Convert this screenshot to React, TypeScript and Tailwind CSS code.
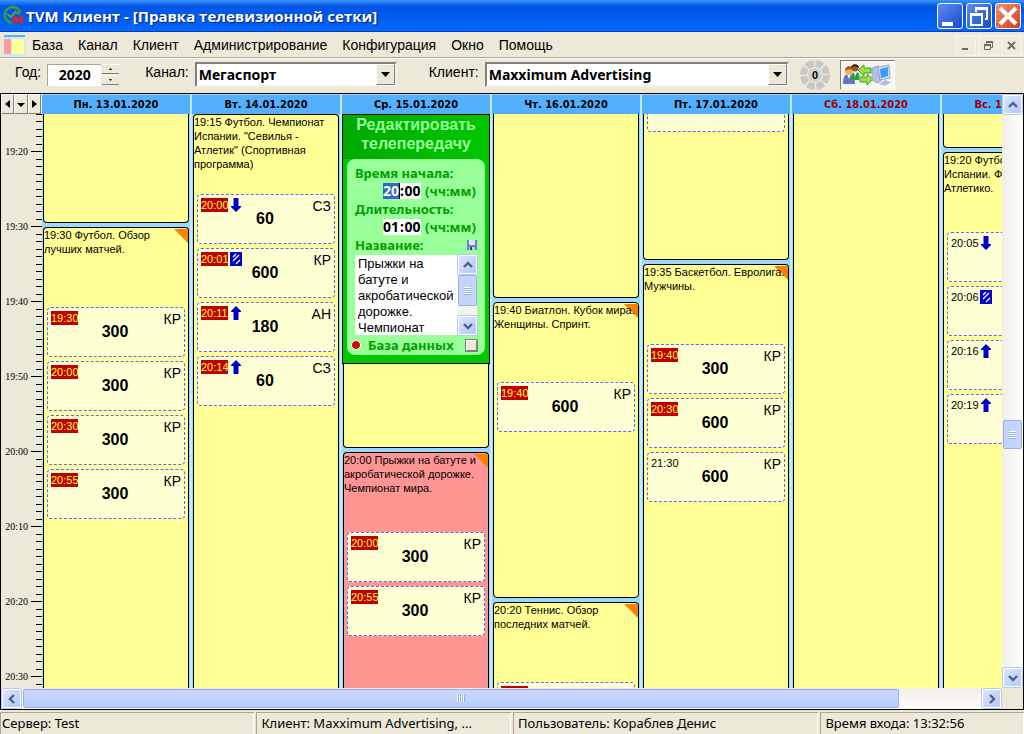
import React from "react";
import clsx from "clsx";

type Mark = "up" | "down" | "both";

interface Spot {
  time: string;
  amount: string;
  code: string;
  hot?: boolean;
  mark?: Mark;
}

interface Program {
  title?: string;
  // static heights of the blocks that end inside the visible area
  size: string;
  open?: boolean;
  corner?: boolean;
  pink?: boolean;
  tail?: boolean;
  spots?: Spot[];
}

interface Day {
  name: string;
  weekend?: boolean;
  editor?: boolean;
  programs: Program[];
}

const DAYS: Day[] = [
  {
    name: "Пн. 13.01.2020",
    programs: [
      { size: "h-[109px]", open: true },
      {
        title: "19:30 Футбол. Обзор лучших матчей.",
        size: "flex-1",
        corner: true,
        spots: [
          { time: "19:30", amount: "300", code: "КР", hot: true },
          { time: "20:00", amount: "300", code: "КР", hot: true },
          { time: "20:30", amount: "300", code: "КР", hot: true },
          { time: "20:55", amount: "300", code: "КР", hot: true },
        ],
      },
    ],
  },
  {
    name: "Вт. 14.01.2020",
    programs: [
      {
        title: '19:15 Футбол. Чемпионат Испании. "Севилья - Атлетик" (Спортивная программа)',
        size: "flex-1",
        spots: [
          { time: "20:00", amount: "60", code: "СЗ", hot: true, mark: "down" },
          { time: "20:01", amount: "600", code: "КР", hot: true, mark: "both" },
          { time: "20:11", amount: "180", code: "АН", hot: true, mark: "up" },
          { time: "20:14", amount: "60", code: "СЗ", hot: true, mark: "up" },
        ],
      },
    ],
  },
  {
    name: "Ср. 15.01.2020",
    editor: true,
    programs: [
      { size: "h-[84px]", open: true },
      {
        title: "20:00 Прыжки на батуте и акробатической дорожке. Чемпионат мира.",
        size: "flex-1",
        corner: true,
        pink: true,
        spots: [
          { time: "20:00", amount: "300", code: "КР", hot: true },
          { time: "20:55", amount: "300", code: "КР", hot: true },
        ],
      },
    ],
  },
  {
    name: "Чт. 16.01.2020",
    programs: [
      { size: "h-[184px]", open: true },
      {
        title: "19:40 Биатлон. Кубок мира. Женщины. Спринт.",
        size: "h-[296px]",
        corner: true,
        spots: [{ time: "19:40", amount: "600", code: "КР", hot: true }],
      },
      {
        title: "20:20 Теннис. Обзор последних матчей.",
        size: "flex-1",
        corner: true,
        spots: [{ time: "20:20", amount: "300", code: "КР", hot: true }],
      },
    ],
  },
  {
    name: "Пт. 17.01.2020",
    programs: [
      { size: "h-[146px]", open: true, tail: true },
      {
        title: "19:35 Баскетбол. Евролига. Мужчины.",
        size: "flex-1",
        corner: true,
        spots: [
          { time: "19:40", amount: "300", code: "КР", hot: true },
          { time: "20:30", amount: "600", code: "КР", hot: true },
          { time: "21:30", amount: "600", code: "КР" },
        ],
      },
    ],
  },
  {
    name: "Сб. 18.01.2020",
    weekend: true,
    programs: [{ size: "flex-1", open: true }],
  },
  {
    name: "Вс. 19.01.2020",
    weekend: true,
    programs: [
      { size: "h-[34px]", open: true },
      {
        title: "19:20 Футбол.\nИспании. Ф\nАтлетико.",
        size: "flex-1",
        spots: [
          { time: "20:05", amount: "60", code: "СЗ", mark: "down" },
          { time: "20:06", amount: "60", code: "КР", mark: "both" },
          { time: "20:16", amount: "60", code: "АН", mark: "up" },
          { time: "20:19", amount: "60", code: "СЗ", mark: "up" },
        ],
      },
    ],
  },
];

// the first segment starts above the visible area, so it has no label
const HOURS = ["", "19:20", "19:30", "19:40", "19:50", "20:00", "20:10", "20:20", "20:30"];
const MENU = ["База", "Канал", "Клиент", "Администрирование", "Конфигурация", "Окно", "Помощь"];

const LogoIcon = () => (
  <svg width="22" height="22" viewBox="0 0 22 22" fill="none" className="shrink-0">
    <path d="M17 5A8 8 0 1 0 11 18" stroke="#3f9a3a" strokeWidth="2.4" />
    <path d="M5 9l4 3 5-6" stroke="#5aa04a" strokeWidth="2" />
    <path d="M19 4l-1 6-5-2z" fill="#3f9a3a" />
    <path d="M11 19l2-7 3 4 4-4-1 7" stroke="#e02020" strokeWidth="2.6" />
  </svg>
);

const GridIcon = () => (
  <svg width="21" height="21" viewBox="0 0 21 21" className="shrink-0">
    <rect width="21" height="21" fill="#c8ecff" />
    <rect width="21" height="2" fill="#52b0ff" />
    <rect y="4" width="7" height="15" fill="#ff9a98" />
    <rect x="8" y="4" width="12" height="15" fill="#ffff96" />
  </svg>
);

const MarkIcon: React.FC<{ mark: Mark }> = ({ mark }) => {
  if (mark === "both") {
    return (
      <svg width="12" height="14" viewBox="0 0 12 14" className="ml-[2px]">
        <rect width="12" height="14" fill="#0000c8" />
        <path d="M3 5l3-3M3 9l6-6M6 12l4-4" stroke="#fff" strokeWidth="1.3" />
      </svg>
    );
  }
  return (
    <svg
      width="10"
      height="14"
      viewBox="0 0 10 14"
      className={clsx("ml-[3px]", mark === "down" && "rotate-180")}
    >
      <path d="M5 0l5 5v1H7.500v8h-5V6H0V5z" fill="#0000c8" />
    </svg>
  );
};

const Chevron: React.FC<{ className?: string }> = ({ className }) => (
  <svg width="10" height="8" viewBox="0 0 10 8" className={className}>
    <path d="M1 6l4-4 4 4" stroke="#4d6185" strokeWidth="2.4" fill="none" />
  </svg>
);

const ScrollButton: React.FC<{ label: string; turn?: string }> = ({ label, turn }) => (
  <button
    type="button"
    aria-label={label}
    className="flex size-[19px] shrink-0 items-center justify-center rounded-[2px] border border-white bg-linear-to-br from-[#dbe5ff] to-[#b4c8f8] shadow-[0_0_0_1px_#b8c8f0]"
  >
    <Chevron className={turn} />
  </button>
);

const Grip: React.FC<{ vertical?: boolean }> = ({ vertical }) => (
  <span className={clsx("flex", vertical && "flex-col")}>
    {[0, 1, 2, 3].map((i) => (
      <span
        key={i}
        className={clsx(
          "border-[#8cb0f8] bg-white",
          vertical ? "h-[2px] w-[7px] border-b" : "h-[7px] w-[2px] border-r"
        )}
      />
    ))}
  </span>
);

const SpotCard: React.FC<{ spot: Spot }> = ({ spot }) => (
  <div className="relative flex h-[50px] shrink-0 justify-between rounded-[4px] border border-dashed border-[#6464f0] bg-[#ffffd4] px-[3px] pt-[3px]">
    <div className="flex h-[14px]">
      <span
        className={clsx(
          "w-[27px] text-[11px] leading-[14px] whitespace-nowrap",
          spot.hot ? "bg-[#c00000] text-[#ffff30]" : "text-black"
        )}
      >
        {spot.time}
      </span>
      {spot.mark && <MarkIcon mark={spot.mark} />}
    </div>
    <span className="text-sm leading-4">{spot.code}</span>
    <span className="absolute inset-x-0 top-[15px] pr-[2px] text-center text-base leading-[18px] font-bold">
      {spot.amount}
    </span>
  </div>
);

const ProgramBlock: React.FC<{ program: Program }> = ({ program }) => (
  <article
    className={clsx(
      "relative mr-[3px] ml-px flex flex-col border-x border-black px-[3px]",
      program.size,
      program.size === "flex-1" ? "min-h-0 overflow-hidden" : "shrink-0 rounded-b-[4px] border-b",
      !program.open && "rounded-t-[4px] border-t",
      program.pink ? "bg-[#ff9694]" : "bg-[#ffff96]"
    )}
  >
    {program.corner && (
      <svg width="14" height="14" viewBox="0 0 14 14" className="absolute top-px right-0">
        <path d="M0 0h14v14z" fill="#ff8000" />
      </svg>
    )}
    {program.tail && (
      <div className="h-[18px] rounded-b-[4px] border border-t-0 border-dashed border-[#6464f0] bg-[#ffffd4]" />
    )}
    {program.title && (
      <h3 className="relative -mx-[3px] h-[79px] shrink-0 text-[11px] leading-[14px] font-normal whitespace-pre-line">
        {program.title}
      </h3>
    )}
    <div className="flex flex-col gap-1">
      {program.spots?.map((spot) => (
        <SpotCard key={spot.time} spot={spot} />
      ))}
    </div>
  </article>
);

interface TimeProps {
  id: string;
  hours: string;
  minutes: string;
  selected?: boolean;
}

const TimeField: React.FC<TimeProps> = ({ id, hours, minutes, selected }) => (
  <div className="flex h-[18px] items-center pl-[28px]">
    <div className="mr-1 flex h-4 items-center bg-white text-sm text-black">
      <input
        id={id}
        defaultValue={hours}
        className={clsx(
          "h-4 w-[17px] border-r text-center font-bold outline-none",
          selected ? "border-black bg-[#316ac5] text-white" : "border-white bg-white"
        )}
      />
      <span className="w-1 text-center leading-4">:</span>
      <input
        aria-label="Минуты"
        defaultValue={minutes}
        className="h-4 w-[17px] bg-white text-center font-bold outline-none"
      />
    </div>
    <span>(чч:мм)</span>
  </div>
);

const ProgramEditor = () => (
  <form className="mr-[2px] flex shrink-0 flex-col border border-black bg-[#00c800] px-1 pb-2">
    <h2 className="-mx-1 bg-linear-to-r from-[#00a800] to-[#00c800] pb-[6px] text-center text-base leading-[19px] font-bold text-[#99ff99]">
      Редактировать телепередачу
    </h2>
    <div className="rounded-lg bg-[#99ff99] px-2 pt-[5px] font-['Noto_Sans','Liberation_Sans',sans-serif] text-[13px] leading-[18px] font-bold text-[#00a000]">
      <label htmlFor="start" className="block">
        Время начала:
      </label>
      <TimeField id="start" hours="20" minutes="00" selected />
      <label htmlFor="length" className="block">
        Длительность:
      </label>
      <TimeField id="length" hours="01" minutes="00" />
      <div className="flex items-center justify-between">
        <label htmlFor="title">Название:</label>
        <button type="button" aria-label="Сохранить">
          <svg width="10" height="10" viewBox="0 0 10 10">
            <rect width="10" height="10" fill="#6a80c8" />
            <rect x="2" width="6" height="5" fill="#dfe8fa" />
            <rect x="2" y="7" width="6" height="3" fill="#c8c8d0" />
            <rect x="3" y="7" width="2" height="3" fill="#304070" />
          </svg>
        </button>
      </div>
      <div className="mt-px flex h-20 bg-white">
        <textarea
          id="title"
          defaultValue="Прыжки на батуте и акробатической дорожке. Чемпионат мира."
          className="min-w-0 flex-1 resize-none overflow-hidden pt-px pl-[3px] font-['Liberation_Sans',sans-serif] text-[13px] leading-4 font-normal text-black outline-none"
        />
        <div className="flex w-[19px] shrink-0 flex-col gap-px bg-[#f4f3ee]">
          <ScrollButton label="Вверх" />
          <div className="flex h-[31px] items-center justify-center rounded-[2px] border border-[#98b0e8] bg-[#c4d4fc]">
            <Grip vertical />
          </div>
          <div className="flex-1" />
          <ScrollButton label="Вниз" turn="rotate-180" />
        </div>
      </div>
      <div className="flex h-5 items-center">
        <span className="-ml-1 size-[10px] rounded-full border border-white bg-[#d80000]" />
        <label htmlFor="db" className="ml-[7px]">
          База данных
        </label>
        <input
          id="db"
          type="checkbox"
          className="ml-auto size-[11px] appearance-none border border-[#808070] border-t-white border-l-white bg-[#ece9d8] outline outline-[#808080]"
        />
      </div>
    </div>
  </form>
);

const Ruler = () => (
  <div className="w-[41px] shrink-0 overflow-hidden bg-[#ece9d8]">
    <div className="-mt-[38px]">
      {HOURS.map((hour) => (
        <div key={hour} className="flex h-[75px] flex-col">
          {[0, 1, 2, 3, 4, 5, 6, 7, 8, 9].map((minute) => (
            <div key={minute} className="flex min-h-0 flex-1 items-start justify-end">
              {minute === 0 && (
                <span className="-mt-[6px] mr-[3px] font-['Liberation_Serif',serif] text-[10px] leading-[14px]">
                  {hour}
                </span>
              )}
              <span className={clsx("h-px bg-black", minute === 0 ? "w-[11px]" : "w-[6px]")} />
            </div>
          ))}
        </div>
      ))}
    </div>
  </div>
);

interface PickerProps {
  id: string;
  label: string;
  value: string;
  width: string;
}

const Picker: React.FC<PickerProps> = ({ id, label, value, width }) => (
  <div className="flex items-center">
    <label htmlFor={id} className="-mt-[6px] mr-[6px]">
      {label}
    </label>
    <div className={clsx("relative", width)}>
      <select
        id={id}
        className="h-[25px] w-full appearance-none border-2 border-[#808080] border-r-[#f4f2e8] border-b-[#f4f2e8] bg-white pl-[2px] font-['Noto_Sans','Liberation_Sans',sans-serif] text-sm leading-5 font-bold"
      >
        <option>{value}</option>
      </select>
      <span className="pointer-events-none absolute top-[2px] right-[2px] flex h-[21px] w-[19px] items-center justify-center border border-white border-r-[#808080] border-b-[#808080] bg-[#ece9d8]">
        <svg width="9" height="5" viewBox="0 0 9 5">
          <path d="M0 0h9L4.500 5z" />
        </svg>
      </span>
    </div>
  </div>
);

const TitleBar = () => (
  <header className="flex h-8 shrink-0 items-center bg-linear-to-b from-[#3a93ff] via-[#0054e3] via-20% to-[#0068ff] pr-[3px] pl-[2px] shadow-[inset_0_-1px_0_#003db8]">
    <LogoIcon />
    <h1 className="ml-[2px] flex-1 font-['Open_Sans','Liberation_Sans',sans-serif] text-[15px] font-bold text-white [text-shadow:1px_1px_1px_#0a1883]">
      TVM Клиент - [Правка телевизионной сетки]
    </h1>
    <div className="flex gap-[3px]">
      <button
        type="button"
        aria-label="Свернуть"
        className="size-[26px] rounded-[3px] border border-white bg-linear-to-br from-[#5c8cf0] to-[#1c48cc]"
      >
        <svg width="24" height="24" viewBox="0 0 24 24">
          <path d="M4 18h11v4H4z" fill="#fff" />
        </svg>
      </button>
      <button
        type="button"
        aria-label="Восстановить"
        className="size-[26px] rounded-[3px] border border-white bg-linear-to-br from-[#5c8cf0] to-[#1c48cc]"
      >
        <svg width="24" height="24" viewBox="0 0 24 24" fill="none" stroke="#fff">
          <path d="M8 4.500h13M3 10.500h13" strokeWidth="3" />
          <path d="M9 4v4M20 4v11h-2M4 10v11h11V10" strokeWidth="2" />
        </svg>
      </button>
      <button
        type="button"
        aria-label="Закрыть"
        className="size-[26px] rounded-[3px] border border-white bg-linear-to-br from-[#f09070] to-[#d03c14]"
      >
        <svg width="24" height="24" viewBox="0 0 24 24">
          <path d="M4 4l16 16M20 4L4 20" stroke="#fff" strokeWidth="4" />
        </svg>
      </button>
    </div>
  </header>
);

const MenuBar = () => (
  <nav className="flex h-[27px] shrink-0 items-center border-b border-white pr-[2px] pl-1 text-sm shadow-[inset_0_-1px_0_#aca899]">
    <GridIcon />
    <div className="ml-[7px] flex flex-1 gap-[15px]">
      {MENU.map((item) => (
        <button key={item} type="button">
          {item}
        </button>
      ))}
    </div>
    <div className="flex gap-[2px] text-[#6c6c64]">
      <button type="button" aria-label="Свернуть окно" className="size-[21px] border border-[#f6f4ec] bg-[#efecdf]">
        <svg width="19" height="19" viewBox="0 0 19 19">
          <path d="M6 12h6v2H6z" fill="currentColor" />
        </svg>
      </button>
      <button type="button" aria-label="Восстановить окно" className="size-[21px] border border-[#f6f4ec] bg-[#efecdf]">
        <svg width="19" height="19" viewBox="0 0 19 19" fill="none" stroke="currentColor">
          <path d="M7 6h7M5 9h7" strokeWidth="2" />
          <path d="M7.500 5v3M13.500 5v6.500H12M5.500 9v4.500h6V9" />
        </svg>
      </button>
      <button type="button" aria-label="Закрыть окно" className="size-[21px] border border-[#f6f4ec] bg-[#efecdf]">
        <svg width="19" height="19" viewBox="0 0 19 19">
          <path d="M6 6l7 7M13 6l-7 7" stroke="currentColor" strokeWidth="2" />
        </svg>
      </button>
    </div>
  </nav>
);

const Toolbar = () => (
  <div className="flex h-[34px] shrink-0 items-center pb-[3px] pl-[15px] text-sm">
    <label htmlFor="year" className="-mt-[6px] mr-[6px]">
      Год:
    </label>
    <input
      id="year"
      defaultValue="2020"
      className="h-[22px] w-[54px] border-t border-l border-[#aca899] bg-white pb-[2px] text-center font-['Noto_Sans','Liberation_Sans',sans-serif] font-bold outline-none"
    />
    <div className="mr-[26px] ml-px flex flex-col gap-px">
      <button
        type="button"
        aria-label="Следующий год"
        className="flex h-[10px] w-[17px] items-center justify-center border-b border-[#808080] shadow-[inset_0_1px_0_#fff]"
      >
        <svg width="3" height="2" viewBox="0 0 3 2">
          <path d="M0 2L1.500 0 3 2z" />
        </svg>
      </button>
      <button
        type="button"
        aria-label="Предыдущий год"
        className="flex h-[10px] w-[17px] items-center justify-center border-b border-[#808080] shadow-[inset_0_1px_0_#fff]"
      >
        <svg width="3" height="2" viewBox="0 0 3 2">
          <path d="M0 0h3L1.500 2z" />
        </svg>
      </button>
    </div>
    <Picker id="channel" label="Канал:" value="Мегаспорт" width="w-[202px]" />
    <div className="w-8" />
    <Picker id="client" label="Клиент:" value="Maxximum Advertising" width="w-[304px]" />
    <svg width="32" height="32" viewBox="0 0 32 32" className="ml-[10px]">
      <circle cx="16" cy="16" r="11.500" fill="none" stroke="#c8c8c8" strokeWidth="7" strokeDasharray="7.5 1.530" />
      <circle cx="16" cy="16" r="7" fill="#d4d2cc" />
      <text
        x="16"
        y="20"
        textAnchor="middle"
        className="font-['Liberation_Sans',sans-serif] text-[11px] font-bold"
      >
        0
      </text>
    </svg>
    <button
      type="button"
      aria-label="Обмен данными"
      className="ml-[9px] flex h-[30px] w-[55px] items-center justify-center border border-[#808080] border-r-white border-b-white bg-[#f8f6ee]"
    >
      <svg width="50" height="22" viewBox="0 0 50 22">
        <path d="M1 20c0-8 2-10 6-10s6 3 6 10z" fill="#6078c0" />
        <path d="M5 10l2 5 2-5z" fill="#fff" />
        <circle cx="7" cy="7" r="4" fill="#f0b060" />
        <path d="M3 7c0-6 8-6 8-1-3-1-5-1-8 1z" fill="#b05010" />
        <path d="M9 16c0-6 2-8 5-8s4 3 3 8z" fill="#28a040" />
        <path d="M12 8l1 5 2-5z" fill="#fff" />
        <circle cx="13" cy="4" r="3.500" fill="#a05828" />
        <path d="M9 4c0-5 8-5 8 0-3-2-5-2-8 0z" fill="#282018" />
        <path d="M16 6l6-5v3h7v5h-7v3z" fill="#9ae048" stroke="#4a9c20" />
        <path d="M31 15l-6-5v3h-7v5h7v3z" fill="#9ae048" stroke="#4a9c20" />
        <path d="M30 4l5-2 4 1v14l-4 2-5-3z" fill="#b4c0e0" stroke="#8890b8" strokeWidth=".6" />
        <path d="M36 3l11-2 1 13-10 2z" fill="#d0dcf4" stroke="#8894c8" strokeWidth=".8" />
        <path d="M38 5l8-2v9l-7 2z" fill="#38a0f0" />
        <path d="M37 20l6-4 6 2-6 4z" fill="#b8bce0" />
      </svg>
    </button>
  </div>
);

const NavButton: React.FC<{ label: string; path: string }> = ({ label, path }) => (
  <button
    type="button"
    aria-label={label}
    className="flex flex-1 items-center justify-center border border-white border-r-[#808080] border-b-[#808080] bg-[#ece9d8]"
  >
    <svg width="8" height="8" viewBox="0 0 8 8">
      <path d={path} />
    </svg>
  </button>
);

const Schedule = () => (
  <main className="flex min-h-0 flex-1 flex-col border border-black">
    <div className="flex min-h-0 flex-1">
      <div className="flex min-w-0 flex-1 flex-col">
        <div className="flex h-5 shrink-0">
          <div className="flex w-[41px] shrink-0 pr-px">
            <NavButton label="Назад" path="M6 0v8L1 4z" />
            <NavButton label="Выбрать дату" path="M0 3h8L4 7z" />
            <NavButton label="Вперёд" path="M2 0v8l5-4z" />
          </div>
          <div className="flex min-w-0 flex-1 overflow-hidden">
            {DAYS.map((day) => (
              <div
                key={day.name}
                className={clsx(
                  "w-[150px] shrink-0 border-t border-r-2 border-t-[#9ed8ff] border-r-[#c4eaff] bg-[#52b0ff] text-center font-['DejaVu_Sans_Condensed','DejaVu_Sans',sans-serif] text-[11px] leading-[19px] font-bold",
                  day.weekend ? "text-[#a00000]" : "text-black"
                )}
              >
                {day.name}
              </div>
            ))}
          </div>
        </div>
        <div className="flex min-h-0 flex-1">
          <Ruler />
          <div className="flex min-w-0 flex-1 overflow-hidden">
            {DAYS.map((day) => (
              <section
                key={day.name}
                aria-label={day.name}
                className="flex w-[150px] shrink-0 flex-col bg-[#9ed8ff] shadow-[inset_-2px_0_0_#c4eaff]"
              >
                {day.editor && <ProgramEditor />}
                <div className="flex min-h-0 flex-1 flex-col gap-1">
                  {day.programs.map((program, i) => (
                    <ProgramBlock key={i} program={program} />
                  ))}
                </div>
              </section>
            ))}
          </div>
        </div>
      </div>
      <div className="flex w-[21px] shrink-0 flex-col items-center bg-linear-to-r from-[#f0eee4] to-white py-px">
        <ScrollButton label="Прокрутить вверх" />
        <div className="grow-[306]" />
        <div className="flex h-[29px] w-[19px] shrink-0 items-center justify-center rounded-[2px] border border-[#98b0e8] bg-[#c4d4fc]">
          <Grip vertical />
        </div>
        <div className="grow-[219]" />
        <ScrollButton label="Прокрутить вниз" turn="rotate-180" />
      </div>
    </div>
    <div className="flex h-[21px] shrink-0">
      <div className="flex min-w-0 flex-1 items-center gap-[2px] bg-linear-to-b from-[#f0eee4] to-white px-px">
        <ScrollButton label="Прокрутить влево" turn="-rotate-90" />
        <div className="flex h-[19px] grow-[878] items-center justify-center rounded-[2px] border border-[#98b0e8] bg-linear-to-b from-[#cad8fd] to-[#b8ccfa]">
          <Grip />
        </div>
        <div className="grow-[80]" />
        <ScrollButton label="Прокрутить вправо" turn="rotate-90" />
      </div>
      <div className="w-[21px] shrink-0 bg-[#ece9d8]" />
    </div>
  </main>
);

const StatusCell: React.FC<{ className: string; children: React.ReactNode }> = ({ className, children }) => (
  <div
    className={clsx(
      "truncate border-t border-l border-[#aca899] leading-[21px] shadow-[inset_-1px_0_0_#fff]",
      className
    )}
  >
    {children}
  </div>
);

export default function App() {
  return (
    <div className="flex h-screen flex-col overflow-hidden bg-[#ece9d8] font-['Liberation_Sans',sans-serif] text-black">
      <TitleBar />
      <MenuBar />
      <Toolbar />
      <Schedule />
      <footer className="flex h-[24px] shrink-0 gap-[2px] pt-[2px] font-['Noto_Sans','Liberation_Sans',sans-serif] text-[13px]">
        <StatusCell className="w-[25%] pl-px">Сервер: Test</StatusCell>
        <StatusCell className="w-[25%] pl-1">Клиент: Maxximum Advertising, ...</StatusCell>
        <StatusCell className="w-[30%] pl-1">Пользователь: Кораблев Денис</StatusCell>
        <StatusCell className="w-[20%] pl-1">Время входа: 13:32:56</StatusCell>
      </footer>
    </div>
  );
}
